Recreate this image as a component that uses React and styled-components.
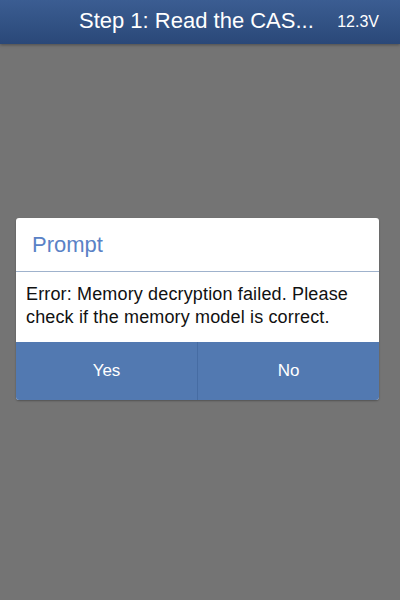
import React from 'react';
import styled, { createGlobalStyle } from 'styled-components';

const GlobalStyle = createGlobalStyle`
	html, body {
		margin: 0;
		padding: 0;
		background: #747474;
		font-family: "Liberation Sans", Arial, sans-serif;
	}
`;

const Screen = styled.div`
	width: 400px;
	height: 600px;
	display: flex;
	flex-direction: column;
	background: #747474;
`;

const Header = styled.div`
	height: 44px;
	flex-shrink: 0;
	display: flex;
	align-items: center;
	padding: 0 21px 0 79px;
	background: linear-gradient(#3b5d92, #2a4878);
	box-shadow: 0 1px 3px rgba(0, 0, 0, 0.35);
	color: #fff;
`;

const Title = styled.div`
	flex: 1;
	font-size: 22px;
	padding-bottom: 2px;
`;

const Voltage = styled.div`
	font-size: 16px;
`;

const Overlay = styled.div`
	flex: 1;
	display: flex;
	flex-direction: column;
	padding: 174px 21px 0 16px;
`;

const Dialog = styled.div`
	background: #fff;
	border-radius: 3px;
	overflow: hidden;
	box-shadow: 0 1px 2px rgba(0, 0, 0, 0.3);
`;

const DialogTitle = styled.div`
	height: 53px;
	display: flex;
	align-items: center;
	padding-left: 16px;
	font-size: 22px;
	color: #5a82c6;
	border-bottom: 1px solid #9fb2cc;
`;

const Message = styled.div`
	padding: 11px 8px 13px 10px;
	font-size: 18px;
	letter-spacing: 0.15px;
	line-height: 23px;
	color: #111;
`;

const Buttons = styled.div`
	display: flex;
	height: 58px;
	background: #5279b1;
`;

const Button = styled.div`
	flex: 1;
	display: flex;
	align-items: center;
	justify-content: center;
	color: #fff;
	font-size: 17px;
	& + & {
		border-left: 1px solid #466ca3;
	}
`;

export default function App() {
	return (
		<Screen>
			<GlobalStyle />
			<Header>
				<Title>Step 1: Read the CAS...</Title>
				<Voltage>12.3V</Voltage>
			</Header>
			<Overlay>
				<Dialog>
					<DialogTitle>Prompt</DialogTitle>
					<Message>
						Error: Memory decryption failed. Please check if the memory model is correct.
					</Message>
					<Buttons>
						<Button>Yes</Button>
						<Button>No</Button>
					</Buttons>
				</Dialog>
			</Overlay>
		</Screen>
	);
}
